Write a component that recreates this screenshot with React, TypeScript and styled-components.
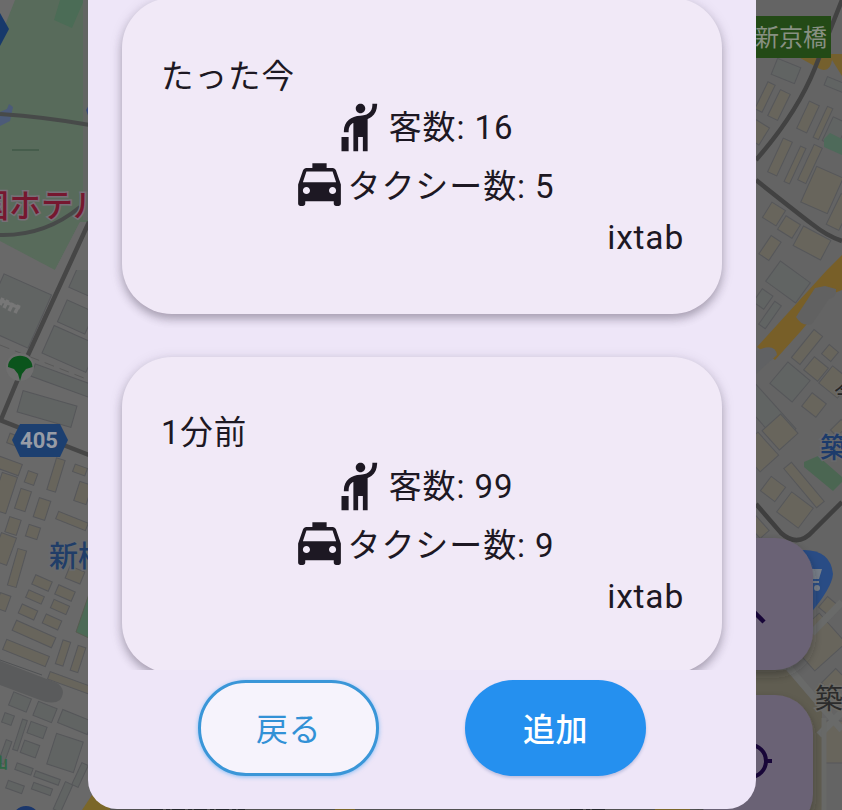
import React from 'react';
import styled, { createGlobalStyle, css } from 'styled-components';
import { MdHail, MdLocalTaxi } from 'react-icons/md';

const GlobalStyle = createGlobalStyle`
  *, *::before, *::after { box-sizing: border-box; }
  body {
    margin: 0;
    overflow: hidden;
    background: #696969;
    color: #1d1823;
    font-family: Roboto, "Noto Sans CJK JP", sans-serif;
  }
`;

const Screen = styled.main`
  display: grid;
  grid-template: 810px / 842px;
  justify-items: start;
  width: 842px;
  height: 810px;
  overflow: hidden;
  > * { grid-area: 1 / 1; }
`;

const MapSvg = styled.svg`
  display: block;
  width: 842px;
  height: 810px;
`;

const Dialog = styled.section`
  z-index: 1;
  display: flex;
  flex-direction: column;
  width: 668px;
  height: 808.5px;
  margin-left: 88px;
  border-radius: 0 0 29px 29px;
  background: #eee6f8;
`;

const ReportList = styled.div`
  display: flex;
  flex-direction: column;
  gap: 43px;
  height: 670px;
  padding: 0 34px;
  overflow: hidden;
`;

const ReportCard = styled.article<{ $first?: boolean }>`
  flex: none;
  display: flex;
  flex-direction: column;
  height: 316px;
  margin-top: ${({ $first }) => ($first ? '-2px' : '0')};
  padding: 54px 37px 0 39px;
  border-radius: 50px;
  background: #f1e9f7;
  box-shadow: 0 5px 8px rgba(50, 40, 60, 0.3), 0 2px 14px rgba(50, 40, 60, 0.13);
`;

const Elapsed = styled.div<{ $raised?: boolean }>`
  height: 47px;
  padding-top: ${({ $raised }) => ($raised ? '1px' : '4px')};
  font-size: 32.5px;
  line-height: 43px;
  letter-spacing: 1px;
`;

const CountRow = styled.div`
  display: flex;
  align-items: center;
  justify-content: center;
  height: 57px;
  margin-right: -3px;
  margin-left: -4px;
  font-size: 33px;
  line-height: 50px;
  letter-spacing: 0.9px;
  white-space: pre;
  svg { flex: none; width: 57px; height: 57px; }
`;

const CountLabel = styled.span<{ $drop: number }>`
  padding-top: ${({ $drop }) => $drop}px;
`;

const Author = styled.div`
  margin-top: 1px;
  margin-right: 1px;
  font-size: 33.5px;
  line-height: 48px;
  letter-spacing: 0.8px;
  text-align: right;
`;

const Actions = styled.footer`
  display: flex;
  justify-content: space-between;
  padding: 10px 110px 0;
`;

const Button = styled.button<{ $primary?: boolean }>`
  width: 181px;
  height: 96px;
  padding: 3px 0 0;
  border-radius: 48px;
  font-family: inherit;
  font-size: 32px;
  line-height: 48px;
  letter-spacing: 0.6px;
  ${({ $primary }) =>
    $primary
      ? css`
          border: 0;
          background: #2590ef;
          color: #fff;
          font-weight: 500;
          box-shadow: 0 2px 3px rgba(50, 80, 150, 0.25);
        `
      : css`
          padding-top: 4px;
          border: 3px solid #3a96d8;
          background: #f6f3fc;
          color: #3291d6;
          font-weight: 400;
          box-shadow: 0 1px 4px rgba(33, 150, 243, 0.5);
        `}
`;

type Lot = [cx: number, cy: number, w: number, h: number, angle: number];

const greyLots: Lot[] = [
  [16, 311, 52, 58, 24], [85, 278, 22, 30, 24], [76, 317, 30, 24, 24],
  [70, 349, 48, 30, 24], [66, 382, 70, 13, 20], [47, 409, 56, 22, 16],
  [20, 702, 19, 14, 22], [45, 712, 20, 15, 22], [75, 722, 32, 14, 22],
  [65, 753, 28, 32, 18], [37, 730, 17, 12, 20], [30, 749, 16, 13, 20],
  [8, 719, 10, 10, 20], [20, 735, 5, 32, 18], [24, 769, 17, 7, 20],
  [47, 778, 26, 6, 20], [15, 787, 17, 8, 20], [42, 789, 20, 7, 20],
  [63, 797, 8, 30, 24], [80, 775, 7, 24, 25], [5, 752, 6, 24, 20],
  [786, 71, 25, 17, 22], [836, 85, 22, 9, 22], [788, 282, 37, 25, 36],
  [790, 382, 29, 28, 40], [767, 413, 22, 62, -42], [763, 299, 13, 16, 35],
  [770, 315, 8, 28, 35], [835, 132, 16, 26, 25],
];

const tanLots: Lot[] = [
  [9, 466, 24, 12, 20], [31, 478, 10, 12, 20], [56, 475, 9, 33, 17],
  [23, 500, 11, 21, 18], [42, 509, 12, 20, 18], [4, 493, 16, 38, 18],
  [13, 526, 12, 16, 18], [33, 532, 12, 12, 18], [80, 470, 13, 8, 20],
  [83, 493, 13, 20, 18], [72, 521, 32, 8, 22], [17, 568, 9, 38, 16],
  [42, 583, 18, 10, 24], [65, 593, 18, 10, 24], [35, 597, 17, 8, 24],
  [60, 607, 17, 9, 24], [28, 612, 17, 10, 24], [52, 622, 17, 10, 24],
  [34, 634, 43, 11, 24], [26, 653, 46, 11, 22], [63, 653, 8, 25, 18],
  [78, 659, 8, 26, 18], [70, 683, 45, 8, 20], [3, 602, 11, 16, 20],
  [4, 549, 16, 29, 20], [75, 575, 16, 13, 22], [14, 440, 12, 10, 20],
  [779, 105, 11, 29, 26], [765, 97, 8, 30, 26], [808, 117, 11, 30, 25],
  [823, 123, 6, 34, 25], [780, 157, 10, 37, 25], [795, 165, 6, 39, 25],
  [810, 164, 9, 39, 25], [822, 190, 29, 39, 24], [774, 214, 16, 18, 32],
  [789, 227, 17, 16, 32], [812, 243, 31, 22, 28], [757, 132, 17, 20, 32],
  [840, 212, 14, 34, 26], [770, 248, 12, 22, 34], [807, 347, 11, 36, 39],
  [816, 369, 18, 17, 39], [830, 353, 12, 12, 40], [835, 382, 24, 22, 39],
  [814, 405, 18, 17, 38], [780, 432, 25, 26, -42], [759, 452, 25, 31, -42],
  [804, 485, 10, 51, -40], [773, 489, 18, 18, 37], [795, 510, 27, 25, 37],
  [839, 428, 15, 9, -45], [758, 527, 12, 20, -42], [828, 606, 13, 14, 40],
  [817, 642, 42, 40, -42], [835, 682, 18, 20, 45], [836, 742, 28, 42, 0],
];

function Lots({ items, fill }: { items: Lot[]; fill: string }) {
  return (
    <g fill={fill} stroke="#56575a" strokeWidth="1">
      {items.map(([cx, cy, w, h, angle], i) => (
        <rect key={i} x={cx - w / 2} y={cy - h / 2} width={w} height={h} transform={`rotate(${angle} ${cx} ${cy})`} />
      ))}
    </g>
  );
}

function MapBackdrop() {
  return (
    <MapSvg viewBox="0 0 842 810" aria-hidden="true">
      <defs>
        <filter id="fabShadow" x="-30%" y="-30%" width="160%" height="160%">
          <feDropShadow dx="0" dy="5" stdDeviation="5" floodColor="#222" floodOpacity=".4" />
        </filter>
      </defs>
      <rect width="842" height="810" fill="#696969" />
      <rect x="750" width="92" height="810" fill="#646464" />
      <Lots items={greyLots} fill="#616463" />
      <Lots items={tanLots} fill="#68655c" />

      <path d="M0 0H89V230L80 222L55 270L0 241Z" fill="#586b5b" />
      <path d="M0 0H15L0 38Z" fill="#6b6b6b" />
      <path d="M60 0H84L72 28L54 20Z" fill="#4b6c56" />
      <path d="M80 222L55 270H89V222Z" fill="#696969" />
      <path d="M86 0V220" stroke="#626663" strokeWidth="6" />
      <path d="M0 13L9 29L0 46Z" fill="#17396b" />
      <path d="M0 112L7 109L9 104L13 107L10 121L0 126Z" fill="#4c5b79" />
      <path d="M89 105L86 110L89 118Z" fill="#3a4b79" />
      <path d="M0 114Q45 117 90 125M0 235Q45 236 80 207" fill="none" stroke="#474a49" strokeWidth="4" />
      <path d="M12 150H39" stroke="#35513e" strokeWidth="1" />
      <path d="M89 222L28 355L0 422M0 420L89 455" fill="none" stroke="#464646" strokeWidth="4.5" />
      <path d="M0 345L89 380" stroke="#595959" strokeWidth="1" strokeDasharray="10 6" />
      <path d="M0 300L20 308M3 298L0 305M8 300L4 308M13 303L9 311M19 305L15 313" stroke="#777" strokeWidth="3.5" fill="none" />
      <path d="M0 661L57 683Q67 690 60 700Q53 705 40 700L0 685Z" fill="#5a5b5c" />
      <path d="M0 660L42 675" stroke="#505254" />
      <path d="M89 594L76 632L89 638Z" fill="#4c6a57" stroke="#565c50" />
      <circle cx="20" cy="367" r="14" fill="#6e6e6e" />
      <path d="M8 367C8 352 32 352 32.500 367L26 369L22 374L20 381L18 374L14 369Z" fill="#0b541c" />
      <path d="M20 424H60L68 440L60 457H20L12 440Z" fill="#1c3f70" />
      <text x="39" y="448" textAnchor="middle" fontSize="22" fontWeight="700" fill="#979ca6" fontFamily="Roboto">405</text>
      <text x="-23" y="217" fontSize="32" fontWeight="500" fill="#76172f" stroke="#777078" strokeWidth="3" paintOrder="stroke" fontFamily="Noto Sans CJK JP">国ホテル</text>
      <text x="49" y="567" fontSize="29" fontWeight="500" fill="#203d68" stroke="#686a6d" strokeWidth="3" paintOrder="stroke" fontFamily="Noto Sans CJK JP">新橋</text>
      <text x="-7" y="768" fontSize="15" fontWeight="700" fill="#2f6744" fontFamily="Noto Sans CJK JP">山</text>
      <circle cx="26" cy="820" r="14" fill="#1b376c" />
      <path d="M82 810L92 795H110V810Z" fill="#7b6729" />
      <path d="M110 809.5H756" stroke="#515151" strokeWidth="2" />
      <path d="M150 809.5H245M570 809.5H606" stroke="#24272b" strokeWidth="2" strokeDasharray="13 3 4 2" />
      <path d="M335 809.5H355M655 809.5H690" stroke="#7b6729" strokeWidth="2" />

      <path d="M793 54L820 69Q830 73 832 60L842 76V54Z" fill="#75602d" />
      <path d="M824 139L830 133L842 139V155L824 147Z" fill="#4e6a5a" />
      <path d="M842 0L815 68Q797 113 756 160M756 180Q795 211 812 224Q827 236 842 241" fill="none" stroke="#424242" strokeWidth="4.500" />
      <path d="M827 270L842 255V290L832 294L801 331L775 360L757 347Z" fill="#785f28" />
      <path d="M815 288L825 286L836 289Q837 297 829 299L812 324Q802 327 796 317Z" fill="#616161" />
      <path d="M756 351Q775 342 777 355L756 374Z" fill="#606163" />
      <path d="M804 462L818 456L842 477V482L833 491L804 467Z" fill="#4b6652" />
      <path d="M756 504L781 533Q798 548 813 531L842 502" fill="none" stroke="#3f3f3f" strokeWidth="4.500" />
      <path d="M756 670H792L822 712V810H756Z" fill="#605d51" />
      <path d="M789 668L842 730M819 735L842 712M812 633L842 602" fill="none" stroke="#696a69" strokeWidth="7" />
      <path d="M824 718V810" stroke="#686967" strokeWidth="5" />

      <rect x="745" y="16" width="86" height="42" fill="#234a16" />
      <text x="755" y="46" fontSize="24" fill="#879082" fontFamily="Noto Sans CJK JP">新京橋</text>
      <text x="834" y="401" fontSize="24" fill="#262626" stroke="#696969" strokeWidth="2" paintOrder="stroke" fontFamily="Noto Sans CJK JP">今</text>
      <text x="820" y="458" fontSize="28" fontWeight="500" fill="#1c3b6b" stroke="#68696b" strokeWidth="3" paintOrder="stroke" fontFamily="Noto Sans CJK JP">築地</text>
      <path d="M792 551Q830 545 833 574Q832 588 809 615L795 590Z" fill="#294c85" />
      <path d="M803 569H822L819 579H807" fill="#777e89" />
      <path d="M807 582H819" stroke="#777e89" strokeWidth="2" />
      <circle cx="817" cy="588" r="3" fill="#777e89" />
      <text x="815" y="709" fontSize="28" fill="#2b2b2b" stroke="#6c6b67" strokeWidth="3" paintOrder="stroke" fontFamily="Noto Sans CJK JP">築地</text>
      <rect x="700" y="538" width="113" height="132" rx="38" fill="#6b6275" filter="url(#fabShadow)" />
      <rect x="700" y="695" width="113" height="137" rx="38" fill="#6b6275" filter="url(#fabShadow)" />
      <path d="M740 598L764 622" stroke="#180638" strokeWidth="4.500" />
      <circle cx="750" cy="761" r="16" fill="none" stroke="#180638" strokeWidth="4" />
      <path d="M766 761H772" stroke="#180638" strokeWidth="4" />
    </MapSvg>
  );
}

interface Report {
  elapsed: string;
  guests: number;
  taxis: number;
  author: string;
}

const reports: Report[] = [
  { elapsed: 'たった今', guests: 16, taxis: 5, author: 'ixtab' },
  { elapsed: '1分前', guests: 99, taxis: 9, author: 'ixtab' },
];

export default function App() {
  return (
    <>
      <GlobalStyle />
      <Screen>
        <MapBackdrop />
        <Dialog role="dialog">
          <ReportList>
            {reports.map((report, i) => (
              <ReportCard key={report.elapsed} $first={i === 0}>
                <Elapsed $raised={i > 0}>{report.elapsed}</Elapsed>
                <CountRow>
                  <MdHail />
                  <CountLabel $drop={1}>客数: {report.guests}</CountLabel>
                </CountRow>
                <CountRow>
                  <MdLocalTaxi />
                  <CountLabel $drop={5}>タクシー数: {report.taxis}</CountLabel>
                </CountRow>
                <Author>{report.author}</Author>
              </ReportCard>
            ))}
          </ReportList>
          <Actions>
            <Button>戻る</Button>
            <Button $primary>追加</Button>
          </Actions>
        </Dialog>
      </Screen>
    </>
  );
}
